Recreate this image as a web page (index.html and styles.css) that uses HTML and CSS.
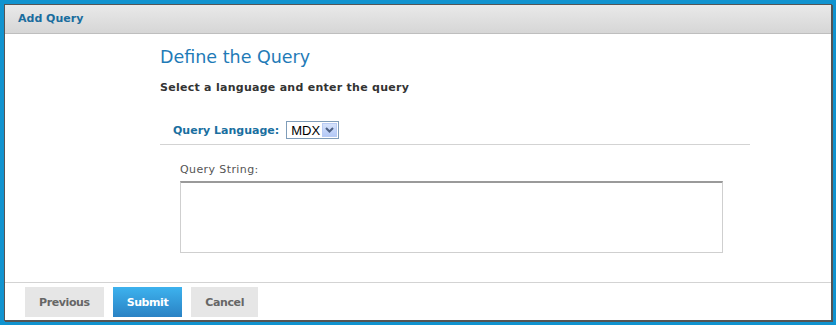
FILE: index.html
```html
<!DOCTYPE html>
<html lang="en">
<head>
  <meta charset="UTF-8" />
  <title>Add Query</title>
  <link rel="stylesheet" href="styles.css">
</head>
<body>
  <div class="dialog">
    <div class="dialog-header">Add Query</div>
    <div class="dialog-body">
      <div class="wizard">
        <h2>Define the Query</h2>
        <p class="subtitle">Select a language and enter the query</p>
        <div class="lang-row">
          <label for="lang">Query Language:</label>
          <div class="select-wrap">
            <select id="lang">
              <option>MDX</option>
            </select>
            <span class="select-btn">
              <svg width="9" height="6" viewBox="0 0 9 6"><path d="M1 1 L4.5 4.5 L8 1" fill="none" stroke="#4d6185" stroke-width="2"/></svg>
            </span>
          </div>
        </div>
        <div class="query-group">
          <label for="query">Query String:</label>
          <textarea id="query"></textarea>
        </div>
      </div>
    </div>
    <div class="dialog-footer">
      <button class="btn">Previous</button>
      <button class="btn primary">Submit</button>
      <button class="btn">Cancel</button>
    </div>
  </div>
</body>
</html>
```

FILE: styles.css
```css
html, body {
  height: 100%;
}

body {
  margin: 0;
  padding: 4px;
  box-sizing: border-box;
  background-color: #1193cf;
  font-family: "DejaVu Sans", Verdana, sans-serif;
  font-size: 11px;
}

.dialog {
  height: 100%;
  box-sizing: border-box;
  background: #fff;
  border: 1px solid #555;
  box-shadow: 1px 1px 0 #555;
  display: flex;
  flex-direction: column;
}

.dialog-header {
  height: 28px;
  line-height: 28px;
  padding-left: 13px;
  background: linear-gradient(#e9e9e9, #d6d6d6);
  border-bottom: 1px solid #bebebe;
  color: #1a6d9e;
  font-weight: bold;
}

.dialog-body {
  flex: 1;
  padding-left: 155px;
}

.wizard {
  width: 590px;
}

h2 {
  margin: 11px 0 0;
  font-size: 17.5px;
  font-weight: normal;
  color: #1f7bb7;
  line-height: 24px;
}

.subtitle {
  margin: 12px 0 0;
  font-weight: bold;
  color: #333;
  line-height: 14px;
  letter-spacing: 0.27px;
}

.lang-row {
  margin-top: 26px;
  padding: 0 0 5px 13px;
  border-bottom: 1px solid #d3d3d3;
  display: flex;
  align-items: center;
  gap: 7px;
}

.lang-row label {
  font-weight: bold;
  color: #1a6fa0;
}

.select-wrap {
  position: relative;
  width: 53px;
  height: 18px;
}

.select-wrap select {
  appearance: none;
  -webkit-appearance: none;
  width: 100%;
  height: 100%;
  margin: 0;
  padding: 0 0 0 4px;
  border: 1px solid #7f9db9;
  border-radius: 0;
  background: #fff;
  font-family: "Liberation Sans", Arial, sans-serif;
  font-size: 13px;
  color: #000;
}

.select-btn {
  position: absolute;
  top: 2px;
  right: 2px;
  width: 15px;
  height: 14px;
  background: linear-gradient(#d5e2fb, #b4c9f6);
  border: 1px solid #b8cbf4;
  box-sizing: border-box;
  display: flex;
  align-items: center;
  justify-content: center;
  pointer-events: none;
}

.query-group {
  padding: 18px 0 0 20px;
}

.query-group label {
  display: block;
  color: #555;
  line-height: 14px;
  letter-spacing: 0.4px;
}

.query-group textarea {
  display: block;
  margin-top: 4px;
  width: 543px;
  height: 72px;
  box-sizing: border-box;
  border: 1px solid #cfcfcf;
  border-top: 2px solid #9a9a9a;
  resize: none;
}

.dialog-footer {
  height: 38px;
  box-sizing: border-box;
  border-top: 1px solid #d3d3d3;
  padding: 4px 0 0 20px;
  display: flex;
  align-items: flex-start;
  gap: 9px;
}

.btn {
  height: 30px;
  padding: 0 14px;
  border: none;
  background: #e6e6e6;
  color: #666;
  font-family: "DejaVu Sans", Verdana, sans-serif;
  font-size: 11px;
  font-weight: bold;
  letter-spacing: -0.4px;
  cursor: pointer;
}

.btn.primary {
  background: linear-gradient(#3db2ee, #2a82c4);
  color: #fff;
}
```
